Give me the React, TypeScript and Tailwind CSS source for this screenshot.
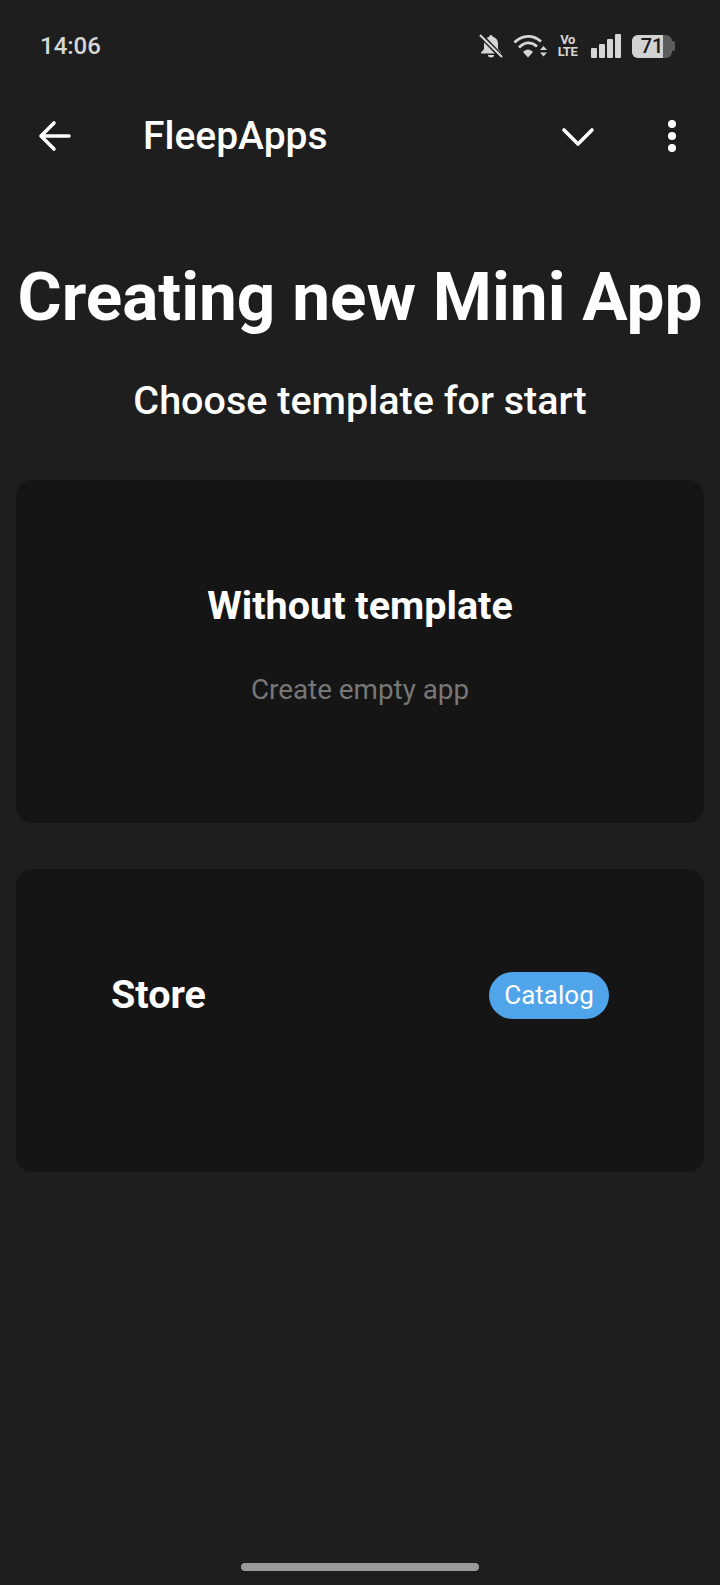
function StatusIcons() {
  return (
    <div className="flex items-center text-[#d6d6d6]">
      {/* muted bell */}
      <svg width="24" height="24" viewBox="0 0 24 24">
        <path d="M12 1c-1 0-1.700.8-1.800 1.700C6.800 3.500 5 6.300 5 9.500v5.500l-3 3.500v1h20v-1l-3-3.500V9.500c0-3.200-1.800-6-5.200-6.800C13.700 1.800 13 1 12 1z" fill="currentColor" />
        <path d="M9 21h6a3 2.500 0 0 1-6 0z" fill="currentColor" />
        <path d="M1 .5 23 23.500" stroke="#1e1e1e" strokeWidth="5" />
        <path d="M1 1 23 23" stroke="currentColor" strokeWidth="2.200" />
      </svg>
      {/* wifi */}
      <svg width="34" height="24" viewBox="0 0 34 24" className="ml-[10px]">
        <path d="M1.500 8.500C9.500 0.500 20 .5 28 7.500" fill="none" stroke="currentColor" strokeWidth="2.800" />
        <path d="M6 13.500C11.500 7.500 18.500 7.500 24 12.500" fill="none" stroke="currentColor" strokeWidth="2.800" />
        <path d="M10 18C13 14.500 17 14.500 20 18L15 23.500Z" fill="currentColor" />
        <path d="M27 16l3.500-4 3.500 4zM27 18.500l3.500 4 3.500-4z" fill="currentColor" />
      </svg>
      <div className="ml-[10px] w-[21px] text-center text-[13px] font-bold leading-[12px] tracking-[-0.5px]">
        Vo
        <br />
        LTE
      </div>
      {/* signal */}
      <div className="ml-[13px] flex h-[24px] items-end gap-[2px]">
        <div className="h-[10px] w-[6px] rounded-[1px] bg-[#d6d6d6]" />
        <div className="h-[14px] w-[6px] rounded-[1px] bg-[#d6d6d6]" />
        <div className="h-[19px] w-[6px] rounded-[1px] bg-[#d6d6d6]" />
        <div className="h-[24px] w-[6px] rounded-[1px] bg-[#d6d6d6]" />
      </div>
      {/* battery */}
      <div className="ml-[11px] flex items-center">
        <div className="relative flex h-[23px] w-[40px] items-center justify-center overflow-hidden rounded-[6px] bg-[#5c5c5c]">
          <div className="absolute inset-y-0 left-0 w-[31px] bg-[#d2d2d2]" />
          <span className="relative text-[20px] font-medium leading-none text-[#1a1a1a]">71</span>
        </div>
        <div className="h-[10px] w-[3px] rounded-r-[2px] bg-[#5c5c5c]" />
      </div>
    </div>
  );
}

export default function App() {
  return (
    <div className="flex h-[1585px] w-[720px] flex-col overflow-hidden bg-[#1e1e1e] font-['Roboto',sans-serif] text-white">
      <div className="flex h-[90px] items-center justify-between pl-[40px] pr-[45px] pt-[2px]">
        <span className="text-[24px] font-medium text-[#d6d6d6]">14:06</span>
        <StatusIcons />
      </div>

      <div className="flex h-[90px] items-center pl-[38px] pr-[44px] pt-[2px]">
        <svg width="34" height="32" viewBox="0 0 34 32" fill="none" stroke="currentColor" strokeWidth="3.600" strokeLinecap="round" strokeLinejoin="round">
          <path d="M31 16H3M16 3 3 16l13 13" />
        </svg>
        <span className="ml-[71px] flex-1 text-[39px] font-medium leading-none">FleepApps</span>
        <svg width="34" height="20" viewBox="0 0 34 20" fill="none" stroke="currentColor" strokeWidth="3.600" strokeLinecap="round" strokeLinejoin="round" className="mr-[73px] mt-[2px]">
          <path d="M3 3l14 14L31 3" />
        </svg>
        <div className="flex flex-col gap-[4px]">
          <div className="h-[8px] w-[8px] rounded-full bg-white" />
          <div className="h-[8px] w-[8px] rounded-full bg-white" />
          <div className="h-[8px] w-[8px] rounded-full bg-white" />
        </div>
      </div>

      <h1 className="mt-[82px] text-center text-[67.5px] font-bold leading-[70px]">Creating new Mini App</h1>
      <p className="mt-[46px] text-center text-[39.5px] font-medium leading-[46px]">Choose template for start</p>

      <div className="mt-[56px] flex flex-col gap-[46px] px-[16px]">
        <div className="flex h-[343px] flex-col items-center rounded-[16px] bg-[#151515] pt-[103px]">
          <span className="text-[39.5px] font-bold leading-[46px]">Without template</span>
          <span className="mt-[45px] text-[27.8px] leading-[32px] text-[#777777]">Create empty app</span>
        </div>
        <div className="flex h-[303px] items-start justify-between rounded-[16px] bg-[#151515] pl-[95px] pr-[95px] pt-[103px]">
          <span className="text-[39.5px] font-bold leading-[46px]">Store</span>
          <span className="flex h-[47px] w-[120px] items-center justify-center rounded-full bg-[#50a5ea] text-[26px]">Catalog</span>
        </div>
      </div>

      <div className="mt-auto mb-[14px] ml-[241px] h-[8px] w-[238px] rounded-full bg-[#9a9a9a]" />
    </div>
  );
}
